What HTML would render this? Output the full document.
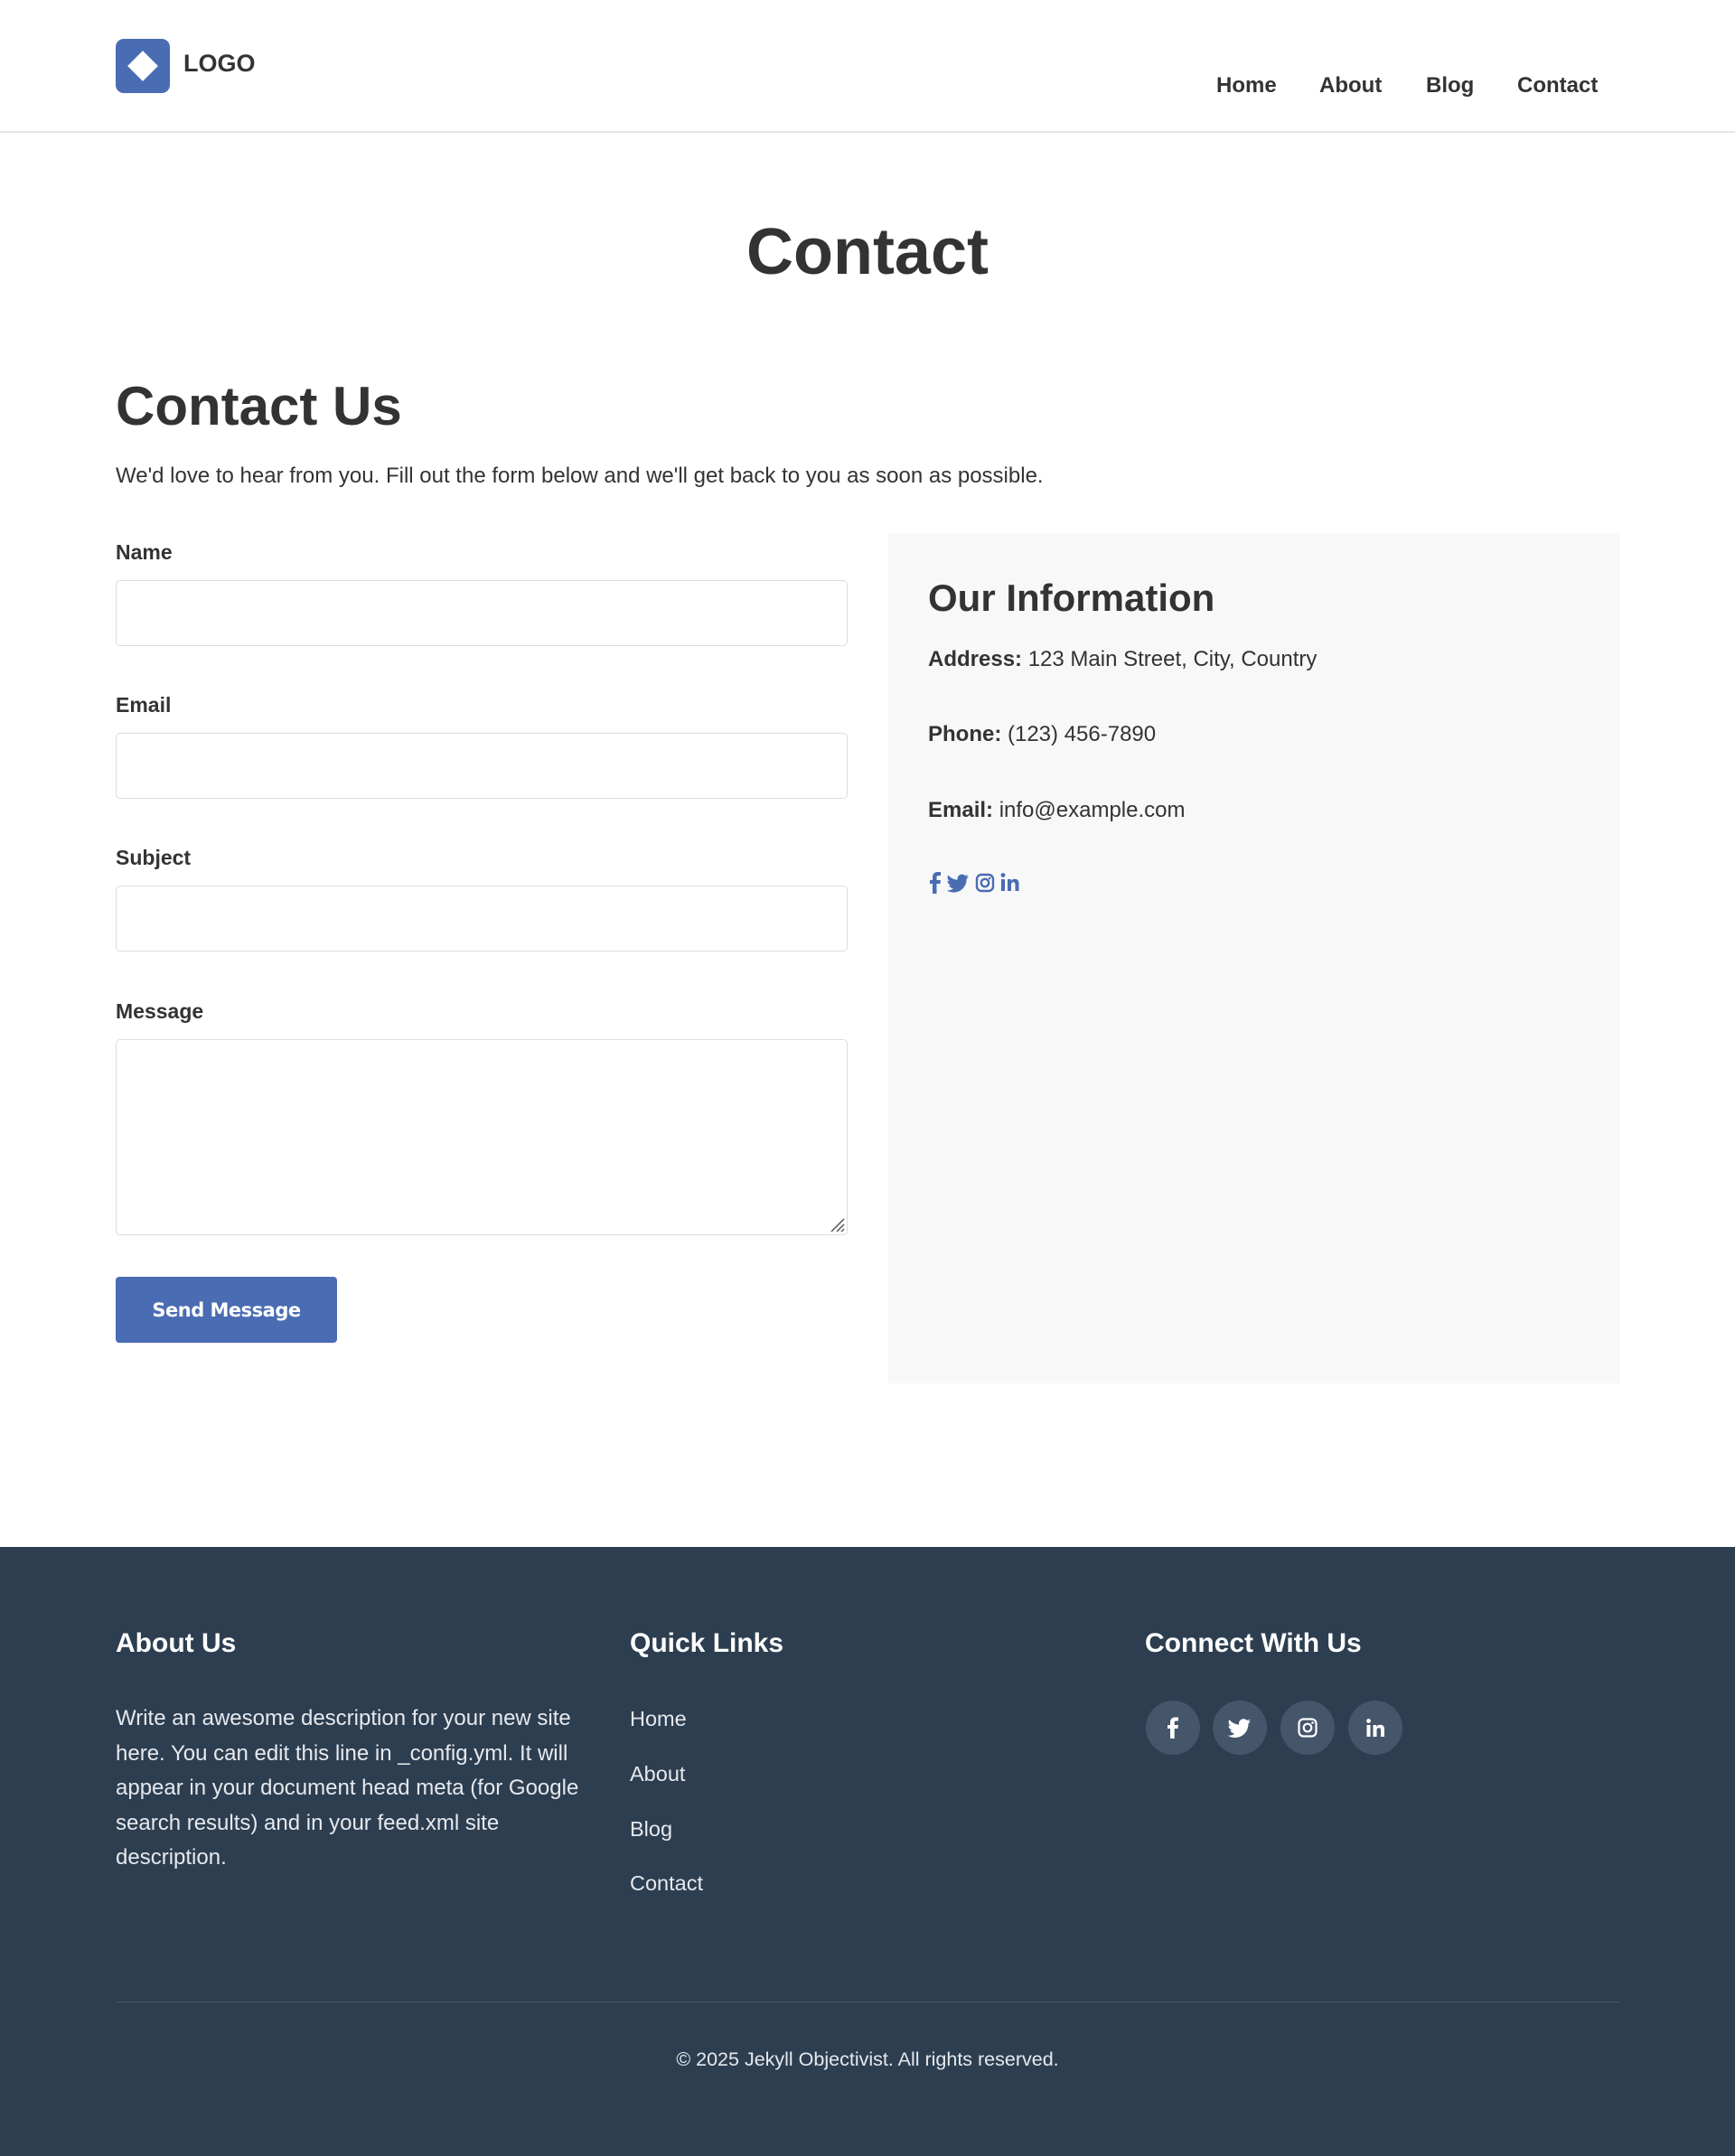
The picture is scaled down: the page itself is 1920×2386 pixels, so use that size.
<!DOCTYPE html>
<html><head><meta charset="utf-8"><style>
*{box-sizing:border-box;margin:0;padding:0}
body{width:1920px;height:2386px;font-family:"Liberation Sans",Arial,sans-serif;color:#333;background:#fff;position:relative;overflow:hidden}
.a{position:absolute}
header{position:absolute;left:0;top:0;width:1920px;height:147px;border-bottom:2px solid #e6e6e6}
.logo{left:128px;top:43px;width:60px;height:60px;background:#4a6cb3;border-radius:9px}
.logo i{position:absolute;left:17px;top:17px;width:26px;height:26px;background:#fff;transform:rotate(45deg) scale(.92)}
.nav{top:81px;font-weight:bold;font-size:24px}
label{position:absolute;left:128px;font-weight:bold;font-size:23px}
.inp{position:absolute;left:128px;width:810px;height:73px;border:1.5px solid #ddd;border-radius:5px;background:#fff}
.info{left:983px;top:590px;width:810px;height:941px;background:#f8f8f8}
.info p{position:absolute;left:44px;font-size:24px}
footer{position:absolute;left:0;top:1712px;width:1920px;height:674px;background:#2d3e50;color:#e6e9ee}
footer h3{position:absolute;top:90px;font-size:30px;color:#fff}
.fl{position:absolute;left:697px;font-size:23.5px}
.c{position:absolute;top:170px;width:60px;height:60px;border-radius:50%;background:#45556a;display:flex;align-items:center;justify-content:center}
</style></head><body>
<header>
<div class="a logo"><i></i></div>
<div class="a" style="left:203px;top:55px;font-size:27px;font-weight:bold">LOGO</div>
<div class="a nav" style="left:1346px">Home</div>
<div class="a nav" style="left:1460px">About</div>
<div class="a nav" style="left:1578px">Blog</div>
<div class="a nav" style="left:1679px">Contact</div>
</header>
<div class="a" style="left:0;width:1920px;top:238px;text-align:center;font-size:72px;font-weight:bold">Contact</div>
<div class="a" style="left:128px;top:415px;font-size:60px;font-weight:bold">Contact Us</div>
<div class="a" style="left:128px;top:513px;font-size:24px">We'd love to hear from you. Fill out the form below and we'll get back to you as soon as possible.</div>
<label style="top:598px">Name</label><div class="inp" style="top:642px"></div>
<label style="top:767px">Email</label><div class="inp" style="top:811px"></div>
<label style="top:936px">Subject</label><div class="inp" style="top:980px"></div>
<label style="top:1106px">Message</label><div class="inp" style="top:1150px;height:217px">
<svg style="position:absolute;right:2px;bottom:2px" width="18" height="18" stroke="#555" stroke-width="1.5"><path d="M17 3L3 17M17 9L9 17M17 14L14 17"/></svg></div>
<div class="a" style="left:128px;top:1413px;width:245px;height:73px;background:#4a6cb3;border-radius:4px;color:#fff;font-family:'DejaVu Sans',sans-serif;font-weight:bold;font-size:21px;letter-spacing:-0.5px;display:flex;align-items:center;justify-content:center">Send Message</div>
<div class="a info">
<div class="a" style="left:44px;top:48px;font-size:42px;font-weight:bold">Our Information</div>
<p style="top:126px"><b>Address:</b> 123 Main Street, City, Country</p>
<p style="top:209px"><b>Phone:</b> (123) 456-7890</p>
<p style="top:293px"><b>Email:</b> info@example.com</p>
<svg class="a" style="left:44px;top:374px" width="120" height="26" fill="#4a6cb3">
<path d="M5 25V14H2V10H5V7C5 3 7 1 11 1H14V5H11.5C10 5 9.5 5.8 9.5 7V10H14L13.4 14H9.5V25Z"/>
<g transform="translate(1,0)"><path d="M44 6c-.9.4-1.9.7-2.9.8 1-.6 1.8-1.6 2.2-2.8-1 .6-2 1-3.2 1.2C39.200 4.200 37.900 3.600 36.500 3.600c-2.800 0-5 2.300-5 5 0 .4 0 .8.1 1.100C27.500 9.500 23.800 7.500 21.300 4.500c-.4.700-.7 1.600-.7 2.500 0 1.700.9 3.300 2.200 4.200-.8 0-1.600-.3-2.300-.6 0 2.400 1.700 4.500 4 5-.4.1-.9.2-1.300.2-.3 0-.6 0-.9-.1.600 2 2.500 3.500 4.700 3.500-1.700 1.400-3.900 2.200-6.200 2.200-.4 0-.8 0-1.200-.1 2.200 1.400 4.900 2.300 7.700 2.300 9.200 0 14.300-7.700 14.300-14.300v-.6C42.500 7.900 43.300 7 44 6Z"/></g>
<g transform="translate(5,0)"><rect x="49" y="4" width="18" height="18" rx="5" fill="none" stroke="#4a6cb3" stroke-width="2.4"/><circle cx="58" cy="13" r="4.2" fill="none" stroke="#4a6cb3" stroke-width="2.4"/><circle cx="63" cy="8" r="1.3"/></g>
<g transform="translate(9,0)"><rect x="72" y="9" width="4" height="13"/><circle cx="74" cy="4.5" r="2.4"/><path d="M79 9h3.8v2c.8-1.400 2.300-2.300 4.200-2.300 3 0 4.500 1.800 4.500 5.300V22h-4v-7c0-1.800-.6-2.800-2.100-2.800-1.500 0-2.400 1-2.400 2.800v7H79Z"/></g>
</svg>
</div>
<footer>
<h3 style="left:128px">About Us</h3>
<h3 style="left:697px">Quick Links</h3>
<h3 style="left:1267px">Connect With Us</h3>
<div class="a" style="left:128px;top:171px;width:540px;font-size:24px;line-height:38.5px">Write an awesome description for your new site here. You can edit this line in _config.yml. It will appear in your document head meta (for Google search results) and in your feed.xml site description.</div>
<div class="fl" style="top:177px">Home</div>
<div class="fl" style="top:238px">About</div>
<div class="fl" style="top:299px">Blog</div>
<div class="fl" style="top:359px">Contact</div>
<div class="c" style="left:1268px"><svg width="14" height="24" fill="#fff"><path d="M4 24V13H1V9H4V6C4 2.500 6 .5 9.500 .5H13V4.500H10.500C9.300 4.500 8.700 5 8.700 6.300V9H13L12.400 13H8.700V24Z"/></svg></div>
<div class="c" style="left:1342px"><svg width="26" height="22" viewBox="20 3 25 20" fill="#fff"><path d="M44 6c-.9.4-1.9.7-2.9.8 1-.6 1.8-1.6 2.2-2.8-1 .6-2 1-3.2 1.2C39.200 4.200 37.900 3.600 36.500 3.600c-2.800 0-5 2.300-5 5 0 .4 0 .8.1 1.100C27.500 9.500 23.800 7.500 21.300 4.500c-.4.700-.7 1.600-.7 2.500 0 1.700.9 3.300 2.200 4.200-.8 0-1.600-.3-2.300-.6 0 2.400 1.700 4.500 4 5-.4.1-.9.2-1.300.2-.3 0-.6 0-.9-.1.600 2 2.500 3.500 4.700 3.500-1.700 1.400-3.900 2.200-6.200 2.200-.4 0-.8 0-1.200-.1 2.200 1.400 4.900 2.300 7.700 2.300 9.200 0 14.300-7.700 14.300-14.300v-.6C42.500 7.900 43.300 7 44 6Z"/></svg></div>
<div class="c" style="left:1417px"><svg width="22" height="22"><rect x="1.5" y="1.5" width="19" height="19" rx="5" fill="none" stroke="#fff" stroke-width="2.2"/><circle cx="11" cy="11" r="4.3" fill="none" stroke="#fff" stroke-width="2.2"/><circle cx="16.5" cy="5.5" r="1.3" fill="#fff"/></svg></div>
<div class="c" style="left:1492px"><svg width="22" height="22" viewBox="71 1 21 22" fill="#fff"><rect x="72" y="9" width="4" height="13"/><circle cx="74" cy="4.5" r="2.4"/><path d="M79 9h3.8v2c.8-1.400 2.300-2.300 4.200-2.300 3 0 4.500 1.800 4.500 5.300V22h-4v-7c0-1.800-.6-2.800-2.100-2.800-1.500 0-2.400 1-2.400 2.800v7H79Z"/></svg></div>
<div class="a" style="left:128px;top:503px;width:1664px;height:1px;background:#46566a"></div>
<div class="a" style="left:0;width:1920px;top:555px;text-align:center;font-size:21.5px">© 2025 Jekyll Objectivist. All rights reserved.</div>
</footer>
</body></html>
